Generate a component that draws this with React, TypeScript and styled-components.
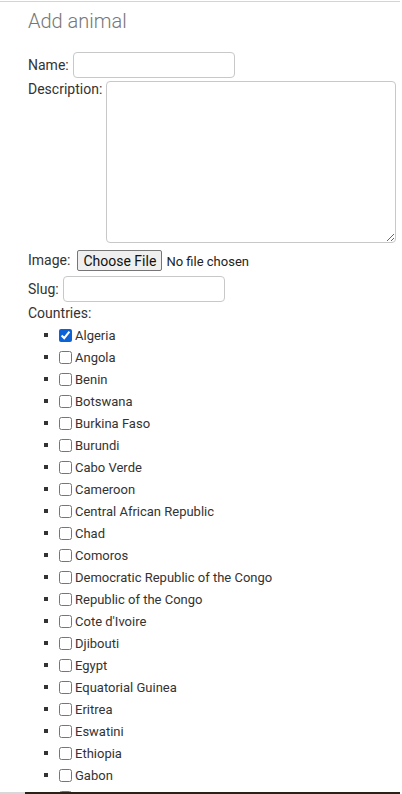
import styled, { createGlobalStyle } from 'styled-components';

const countries = [
    'Algeria',
    'Angola',
    'Benin',
    'Botswana',
    'Burkina Faso',
    'Burundi',
    'Cabo Verde',
    'Cameroon',
    'Central African Republic',
    'Chad',
    'Comoros',
    'Democratic Republic of the Congo',
    'Republic of the Congo',
    "Cote d'Ivoire",
    'Djibouti',
    'Egypt',
    'Equatorial Guinea',
    'Eritrea',
    'Eswatini',
    'Ethiopia',
    'Gabon',
    'Gambia',
];

const GlobalStyle = createGlobalStyle`
    html, body {
        margin: 0;
        background: #fff;
        overflow: hidden;
    }
    body {
        font-family: Roboto, "Liberation Sans", sans-serif;
        color: #333;
        font-size: 14px;
    }
`;

const App: React.FC = () => {
    return (
        <Page>
            <GlobalStyle />
            <Title>Add animal</Title>

            <Form>
                <Row>
                    <Label htmlFor="name">Name:</Label>
                    <TextInput id="name" type="text" />
                </Row>

                <Row top>
                    <Label htmlFor="description">Description:</Label>
                    <TextArea id="description" />
                </Row>

                <Row>
                    <Label>Image:</Label>
                    <FileButton type="button">Choose File</FileButton>
                    <FileStatus>No file chosen</FileStatus>
                </Row>

                <Row>
                    <Label htmlFor="slug">Slug:</Label>
                    <TextInput id="slug" type="text" />
                </Row>

                <Label>Countries:</Label>
                <CountryList>
                    {countries.map((country, i) => (
                        <CountryItem key={country}>
                            <Check type="checkbox" defaultChecked={i === 0} />
                            {country}
                        </CountryItem>
                    ))}
                </CountryList>
            </Form>

            <BottomBar>
                <BarGrey />
                <BarDark />
            </BottomBar>
        </Page>
    )
}

const Page = styled.div`
    border-top: 1px solid #d4d4d4;
    margin-top: 1px;
    margin-right: 2px;
    padding: 0 0 0 28px;
`;

const Title = styled.h1`
    font-size: 20px;
    font-weight: 300;
    color: #777;
    margin: 0;
    padding-top: 7px;
    line-height: 24px;
`;

const Form = styled.form`
    display: flex;
    flex-direction: column;
    margin-top: 19px;
`;

const Row = styled.div<{ top?: boolean }>`
    display: flex;
    align-items: ${props => props.top ? 'flex-start' : 'center'};
    gap: 4px;
    margin-bottom: 3px;
`;

const Label = styled.label`
    font-size: 14px;
    line-height: 16px;
    color: #333;
`;

const TextInput = styled.input`
    box-sizing: border-box;
    width: 162px;
    height: 26px;
    border: 1px solid #c8c8c8;
    border-radius: 4px;
    font-family: inherit;
    font-size: 14px;
    padding: 2px 6px;
    outline: none;
`;

const TextArea = styled.textarea`
    box-sizing: border-box;
    width: 290px;
    height: 162px;
    border: 1px solid #c8c8c8;
    border-radius: 4px;
    font-family: inherit;
    font-size: 14px;
    outline: none;
`;

const FileButton = styled.button`
    box-sizing: border-box;
    height: 21px;
    width: 85px;
    margin: 4px 0 2px 3px;
    padding: 0;
    background: #efefef;
    border: 1px solid #767676;
    border-radius: 2px;
    font-family: inherit;
    font-size: 14px;
    color: #111;
`;

const FileStatus = styled.span`
    font-size: 13px;
    color: #222;
    margin-top: 3px;
`;

const CountryList = styled.ul`
    list-style: none;
    margin: 4px 0 0 0;
    padding-left: 27px;
    font-size: 13px;
`;

const CountryItem = styled.li`
    line-height: 22px;
    height: 22px;
    font-size: 13px;
    color: #333;

    &::before {
        content: '';
        display: inline-block;
        width: 4px;
        height: 4px;
        background: #333;
        margin-left: -11px;
        margin-right: 7px;
        vertical-align: 3px;
    }
`;

const Check = styled.input`
    width: 13px;
    height: 13px;
    margin: 0 3px 0 4px;
    vertical-align: -2px;
    accent-color: #0b63d6;
`;

const BottomBar = styled.div`
    position: fixed;
    left: 0;
    right: 2px;
    bottom: 0;
    height: 2px;
    display: flex;
`;

const BarGrey = styled.div`
    width: 25px;
    background: #d8d8d8;
`;

const BarDark = styled.div`
    flex: 1;
    background: #2a2119;
`;

export default App
